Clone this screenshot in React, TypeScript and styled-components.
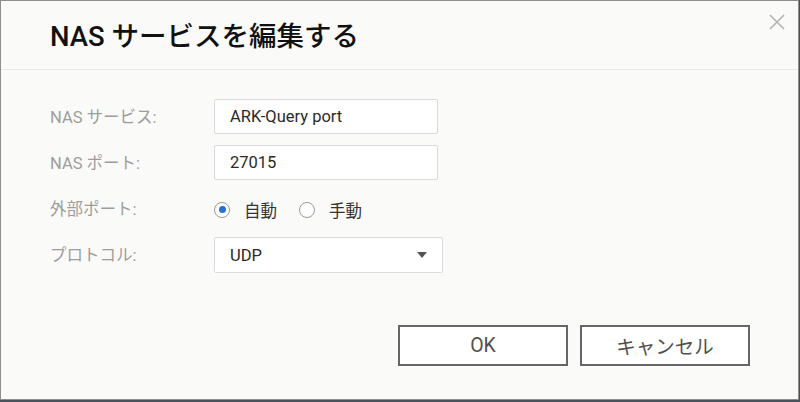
import React from "react";
import styled, { createGlobalStyle } from "styled-components";

const GlobalStyle = createGlobalStyle`
  html, body {
    margin: 0;
    padding: 0;
    background: #4a525b;
  }
  body {
    font-family: Roboto, "Noto Sans CJK JP", sans-serif;
  }
`;

const fields = [
  { label: "NAS サービス:", value: "ARK-Query port" },
  { label: "NAS ポート:", value: "27015" }
];

const App = () => {
  return (
    <>
      <GlobalStyle />
      <Dialog>
        <Header>
          <Title>NAS サービスを編集する</Title>
          <Close aria-label="close">
            <svg width="16" height="16" viewBox="0 0 16 16">
              <path d="M1 1 L15 15 M15 1 L1 15" stroke="#b3b3b3" strokeWidth="1.6" />
            </svg>
          </Close>
        </Header>
        <Form>
          {fields.map((f, id) => (
            <React.Fragment key={id}>
              <Label>{f.label}</Label>
              <Cell>
                <Input>{f.value}</Input>
              </Cell>
            </React.Fragment>
          ))}
          <Label>外部ポート:</Label>
          <Cell>
            <RadioGroup>
              <RadioOption>
                <Radio checked />
                自動
              </RadioOption>
              <RadioOption>
                <Radio />
                手動
              </RadioOption>
            </RadioGroup>
          </Cell>
          <Label>プロトコル:</Label>
          <Cell>
            <Select>
              UDP
              <Caret />
            </Select>
          </Cell>
        </Form>
        <Footer>
          <Button>OK</Button>
          <Button>キャンセル</Button>
        </Footer>
      </Dialog>
    </>
  );
};

const Dialog = styled.div`
  position: relative;
  width: 797px;
  height: 398px;
  background: #fafaf9;
  border: 1px solid #8e8e8e;
  display: flex;
  flex-direction: column;
`;

const Header = styled.div`
  height: 68px;
  border-bottom: 1px solid #e8e8e7;
  display: flex;
  align-items: center;
  padding-left: 49px;
`;

const Title = styled.div`
  font-size: 27.5px;
  font-weight: 500;
  color: #111;
  margin-top: -2px;
`;

const Close = styled.div`
  position: absolute;
  top: 13px;
  right: 13px;
  width: 16px;
  height: 16px;
  cursor: pointer;
  display: flex;
`;

const Form = styled.div`
  display: grid;
  grid-template-columns: 164px 1fr;
  grid-template-rows: 46px 46px 46px 36px;
  padding: 29px 0 0 49px;
`;

const Label = styled.div`
  font-size: 16.5px;
  color: #9d9d9d;
  height: 33px;
  display: flex;
  align-items: center;
`;

const Cell = styled.div`
  display: flex;
  align-items: flex-start;
`;

const Input = styled.div`
  box-sizing: border-box;
  width: 224px;
  height: 35px;
  border: 1px solid #dadada;
  border-radius: 2px;
  background: #fff;
  padding-left: 15px;
  display: flex;
  align-items: center;
  font-size: 16.5px;
  color: #2a2a2a;
`;

const RadioGroup = styled.div`
  display: flex;
  align-items: center;
  gap: 22px;
  height: 37px;
`;

const RadioOption = styled.label`
  display: flex;
  align-items: center;
  gap: 14px;
  font-size: 16.5px;
  color: #333;
`;

const Radio = styled.span<{ checked?: boolean }>`
  box-sizing: border-box;
  width: 16px;
  height: 16px;
  border-radius: 50%;
  border: 1px solid #9a9a9a;
  background: #fff;
  position: relative;
  &::after {
    content: "";
    display: ${(p) => (p.checked ? "block" : "none")};
    position: absolute;
    left: 3.5px;
    top: 3.5px;
    width: 7px;
    height: 7px;
    border-radius: 50%;
    background: #1f73d3;
  }
`;

const Select = styled.div`
  box-sizing: border-box;
  width: 229px;
  height: 36px;
  border: 1px solid #dadada;
  border-radius: 2px;
  background: #fff;
  padding: 0 15px 0 15px;
  display: flex;
  align-items: center;
  justify-content: space-between;
  font-size: 16.5px;
  color: #2a2a2a;
`;

const Caret = styled.span`
  width: 0;
  height: 0;
  border-left: 5px solid transparent;
  border-right: 5px solid transparent;
  border-top: 6px solid #555;
`;

const Footer = styled.div`
  display: flex;
  justify-content: flex-end;
  gap: 12px;
  padding: 52px 48px 0 0;
`;

const Button = styled.button`
  box-sizing: border-box;
  width: 170px;
  height: 41px;
  border: 2px solid #666;
  background: #fff;
  font-family: Roboto, "Noto Sans CJK JP", sans-serif;
  font-size: 19.5px;
  font-weight: 400;
  color: #505050;
  cursor: pointer;
`;

export default App;
